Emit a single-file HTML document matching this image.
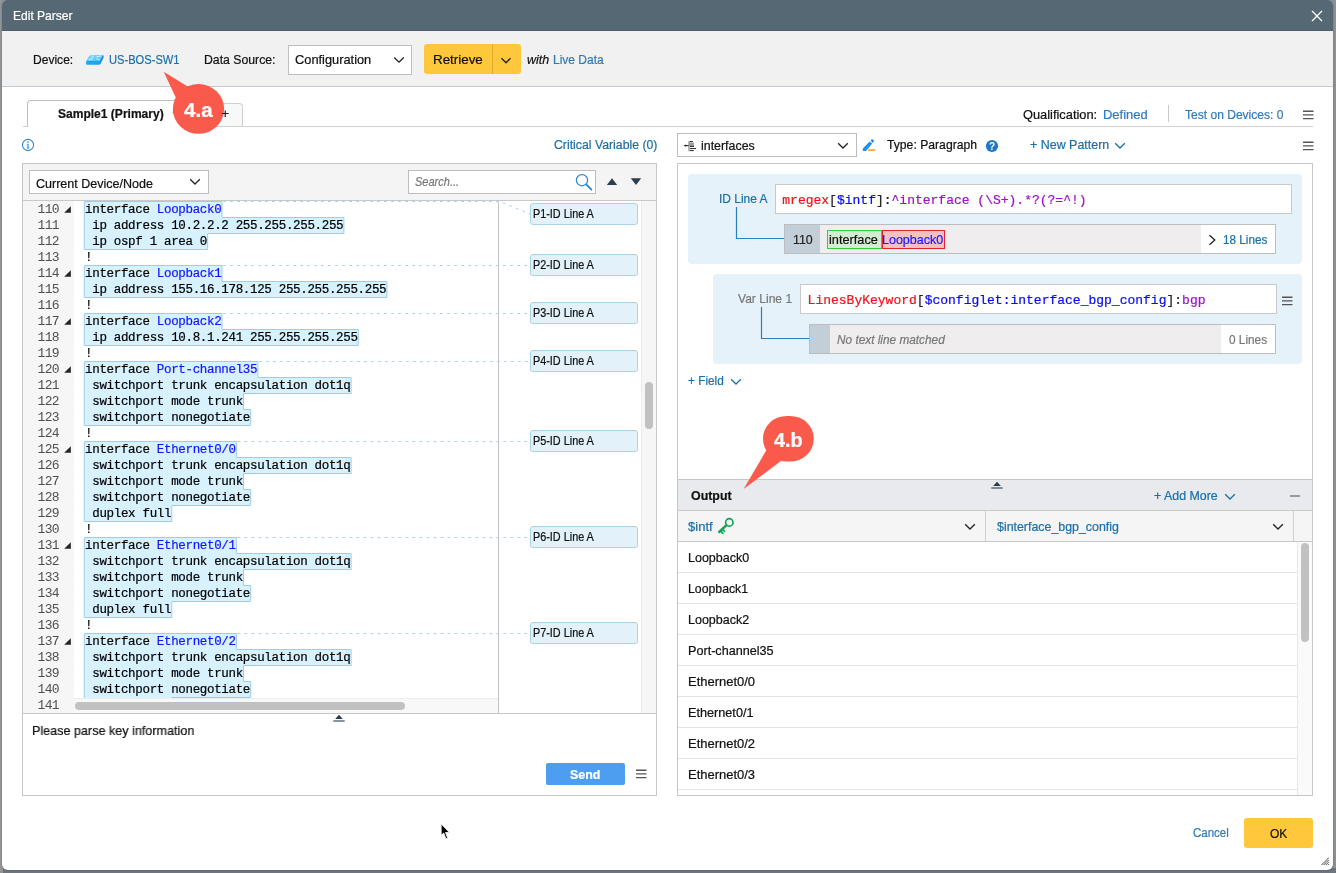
<!DOCTYPE html>
<html><head><meta charset="utf-8"><title>Edit Parser</title>
<style>
*{box-sizing:border-box;margin:0;padding:0}
html,body{width:1336px;height:873px;overflow:hidden}
body{position:relative;background:linear-gradient(90deg,#939698 0,#939698 3px,#8d9193 1333px,#8d9193 1336px);font-family:"Liberation Sans",sans-serif}
.abs,.t,.ln,.cl{position:absolute}
.t{white-space:pre;transform-origin:0 50%;-webkit-text-stroke:.22px}
#root{position:absolute;left:0;top:0;width:1336px;height:873px;will-change:transform}
#bgbot{left:3px;top:868px;width:1333px;height:5px;background:#6d767f}
#dlg{left:2px;top:0;width:1331px;height:870px;background:#fff;border-radius:5px 5px 6px 6px;overflow:hidden;box-shadow:0 0 2px rgba(0,0,0,.3)}
#hdr{left:0;top:0;width:1331px;height:31px;background:#566874;border-bottom:1px solid #4c5e6b}
#tb{left:0;top:31px;width:1331px;height:56px;background:#f1f1f1;border-bottom:1px solid #c5cad0}
.box{background:#fff;border:1px solid #c4c4c4}
.ln{left:37.6px;font:13px/16px "Liberation Mono",monospace;color:#505050;white-space:nowrap;letter-spacing:-.75px}
.cl{left:85.1px;font:12.5px/16px "Liberation Mono",monospace;color:#000;white-space:pre;letter-spacing:-.33px;-webkit-text-stroke:.2px}
.cl b{font-weight:normal;color:#1414ff}
.mono{font-family:"Liberation Mono",monospace}
.lbl{background:#e2f1fa;border:1px solid #a9d3ea;border-radius:3px}

</style></head>
<body>
<div id="root">
<div id="bgbot" class="abs"></div>
<div id="dlg" class="abs">
<div id="hdr" class="abs"></div>
<div id="tb" class="abs"></div>
</div>
<svg class="abs" style="left:1311px;top:10px" width="12" height="12" viewBox="0 0 12 12"><path d="M1.3 1.3L10.7 10.7M10.7 1.3L1.3 10.7" stroke="#fff" stroke-width="1.25" stroke-linecap="round"/></svg>
<svg class="abs" style="left:84px;top:53px" width="22" height="14" viewBox="84 53 22 14"><defs><linearGradient id="sw" x1="0" y1="0" x2="1" y2="1"><stop offset="0" stop-color="#86dafc"/><stop offset="1" stop-color="#4fc0f7"/></linearGradient></defs><path d="M86.2 61.2L90.3 54.9H103.1L103.5 57.6L99.9 64.4Q99.6 64.8 99 64.8H87Q86 64.7 86.1 63.6Z" fill="#1ba6ee"/><path d="M90.3 54.9H103.1L100.1 61H86.5Z" fill="url(#sw)"/><path d="M103.1 54.9L103.5 57.6L99.9 64.4L100.1 61Z" fill="#1488d2"/><path d="M89.3 59.5L92.6 58.7M92 56L93.6 57M96.8 58.6L99 59.8M97 56.7L100.6 56" stroke="#e4f6fe" stroke-width=".9" stroke-linecap="round"/></svg>
<div class="abs box" style="left:288px;top:45px;width:124px;height:30px;border-color:#bfbfbf"></div>
<svg class="abs" style="left:393px;top:56px" width="12" height="8" viewBox="0 0 12 8"><path d="M1.2 1.5L6 6.2L10.8 1.5" fill="none" stroke="#222" stroke-width="1.3"/></svg>
<div class="abs" style="left:424px;top:44px;width:97px;height:30px;background:#ffc83c;border-radius:3px"></div>
<div class="abs" style="left:492px;top:44px;width:1px;height:30px;background:#e3ad2c"></div>
<svg class="abs" style="left:500px;top:57px" width="12" height="8" viewBox="0 0 12 8"><path d="M1.5 1.2L6 5.8L10.5 1.2" fill="none" stroke="#222" stroke-width="1.3"/></svg>
<div class="abs" style="left:198px;top:103px;width:45px;height:24px;background:#f7f8f8;border:1px solid #cdd1d4;border-bottom:none;border-radius:4px 4px 0 0"></div>
<div class="abs" style="left:23px;top:126px;width:1290px;height:1px;background:#cdd1d4"></div>
<div class="abs" style="left:27px;top:100px;width:172px;height:27px;background:#fff;border:1px solid #b9bec3;border-bottom:none;border-radius:4px 4px 0 0"></div>
<svg class="abs" style="left:171.5px;top:110px" width="10" height="8" viewBox="0 0 10 8"><path d="M1 1.5L5 6L9 1.5" fill="none" stroke="#333" stroke-width="1.2"/></svg>
<div class="abs" style="left:1168px;top:105px;width:1px;height:17px;background:#c9c9c9"></div>
<svg class="abs" style="left:21px;top:138px" width="14" height="14" viewBox="0 0 14 14"><circle cx="7" cy="7" r="5.6" fill="#fff" stroke="#2f86d6" stroke-width="1.1"/><path d="M7 6.2V10M5.9 6.3H7.1M5.8 10H8.2" stroke="#2f86d6" stroke-width="1.1" fill="none"/><circle cx="7" cy="4.1" r=".8" fill="#2f86d6"/></svg>
<div class="abs" style="left:22px;top:163px;width:635px;height:633px;background:#fff;border:1px solid #c6c6c6"></div>
<div class="abs" style="left:23px;top:164px;width:633px;height:37px;background:#f4f4f4;border-bottom:1px solid #c9c9c9"></div>
<div class="abs box" style="left:29px;top:170px;width:180px;height:24px;border-color:#bdbdbd"></div>
<svg class="abs" style="left:189px;top:178px" width="12" height="8" viewBox="0 0 12 8"><path d="M1.2 1.3L6 6L10.8 1.3" fill="none" stroke="#222" stroke-width="1.3"/></svg>
<div class="abs box" style="left:408px;top:170px;width:188px;height:24px;border-color:#bdbdbd"></div>
<svg class="abs" style="left:574px;top:172px" width="20" height="20" viewBox="0 0 20 20"><circle cx="8" cy="8.2" r="5.6" fill="none" stroke="#2a8ad0" stroke-width="1.2"/><path d="M12.2 12.4L17.4 17.6" stroke="#2a8ad0" stroke-width="1.9" stroke-linecap="round"/></svg>
<svg class="abs" style="left:606px;top:177px" width="36" height="9" viewBox="0 0 36 9"><path d="M0.8 8L6 1.2L11.2 8Z M24.8 1.2H35.2L30 8Z" fill="#2c3e4d"/></svg>
<div class="abs" style="left:23px;top:201px;width:51px;height:512px;background:#f6f6f6"></div>
<div class="abs" style="left:498px;top:201px;width:1px;height:512px;background:#c2c2c2"></div>
<div class="abs" style="left:641px;top:201px;width:15px;height:512px;background:#f6f6f6;border-left:1px solid #ececec"></div>
<div class="abs" style="left:645px;top:382px;width:8px;height:47px;background:#c1c1c1;border-radius:4px"></div>
<svg class="abs" style="left:74px;top:201px" width="567" height="498" viewBox="74 201 567 498"><polygon points="84.3,201.5 222.0,201.5 222.0,217.5 343.9,217.5 343.9,233.5 207.7,233.5 207.7,249.5 84.3,249.5" fill="#d8f1fe" stroke="#9ccdec" stroke-width="1"/><polygon points="84.3,265.5 222.0,265.5 222.0,281.5 386.9,281.5 386.9,297.5 84.3,297.5" fill="#d8f1fe" stroke="#9ccdec" stroke-width="1"/><polygon points="84.3,313.5 222.0,313.5 222.0,329.5 358.3,329.5 358.3,345.5 84.3,345.5" fill="#d8f1fe" stroke="#9ccdec" stroke-width="1"/><polygon points="84.3,361.5 257.9,361.5 257.9,377.5 351.1,377.5 351.1,393.5 243.5,393.5 243.5,409.5 250.7,409.5 250.7,425.5 84.3,425.5" fill="#d8f1fe" stroke="#9ccdec" stroke-width="1"/><polygon points="84.3,441.5 236.4,441.5 236.4,457.5 351.1,457.5 351.1,473.5 243.5,473.5 243.5,489.5 250.7,489.5 250.7,505.5 171.8,505.5 171.8,521.5 84.3,521.5" fill="#d8f1fe" stroke="#9ccdec" stroke-width="1"/><polygon points="84.3,537.5 236.4,537.5 236.4,553.5 351.1,553.5 351.1,569.5 243.5,569.5 243.5,585.5 250.7,585.5 250.7,601.5 171.8,601.5 171.8,617.5 84.3,617.5" fill="#d8f1fe" stroke="#9ccdec" stroke-width="1"/><polygon points="84.3,633.5 236.4,633.5 236.4,649.5 351.1,649.5 351.1,665.5 243.5,665.5 243.5,681.5 250.7,681.5 250.7,697.5 171.8,697.5 171.8,713.5 84.3,713.5" fill="#d8f1fe" stroke="#9ccdec" stroke-width="1"/><path d="M223.0 201.5H500L530 214" fill="none" stroke="#a9d6ee" stroke-width="1" stroke-dasharray="3 4"/><path d="M223.0 265.5H530" fill="none" stroke="#a9d6ee" stroke-width="1" stroke-dasharray="3 4"/><path d="M223.0 313.5H530" fill="none" stroke="#a9d6ee" stroke-width="1" stroke-dasharray="3 4"/><path d="M258.9 361.5H530" fill="none" stroke="#a9d6ee" stroke-width="1" stroke-dasharray="3 4"/><path d="M237.4 441.5H530" fill="none" stroke="#a9d6ee" stroke-width="1" stroke-dasharray="3 4"/><path d="M237.4 537.5H530" fill="none" stroke="#a9d6ee" stroke-width="1" stroke-dasharray="3 4"/><path d="M237.4 633.5H530" fill="none" stroke="#a9d6ee" stroke-width="1" stroke-dasharray="3 4"/></svg>
<div class="ln" style="top:202px">110</div>
<svg class="abs" style="left:63.5px;top:206px" width="7" height="7" viewBox="0 0 7 7"><path d="M6.8 0.2V6.8H0.2Z" fill="#222"/></svg>
<div class="cl" style="top:202px">interface <b>Loopback0</b></div>
<div class="ln" style="top:218px">111</div>
<div class="cl" style="top:218px"> ip address 10.2.2.2 255.255.255.255</div>
<div class="ln" style="top:234px">112</div>
<div class="cl" style="top:234px"> ip ospf 1 area 0</div>
<div class="ln" style="top:250px">113</div>
<div class="cl" style="top:250px">!</div>
<div class="ln" style="top:266px">114</div>
<svg class="abs" style="left:63.5px;top:270px" width="7" height="7" viewBox="0 0 7 7"><path d="M6.8 0.2V6.8H0.2Z" fill="#222"/></svg>
<div class="cl" style="top:266px">interface <b>Loopback1</b></div>
<div class="ln" style="top:282px">115</div>
<div class="cl" style="top:282px"> ip address 155.16.178.125 255.255.255.255</div>
<div class="ln" style="top:298px">116</div>
<div class="cl" style="top:298px">!</div>
<div class="ln" style="top:314px">117</div>
<svg class="abs" style="left:63.5px;top:318px" width="7" height="7" viewBox="0 0 7 7"><path d="M6.8 0.2V6.8H0.2Z" fill="#222"/></svg>
<div class="cl" style="top:314px">interface <b>Loopback2</b></div>
<div class="ln" style="top:330px">118</div>
<div class="cl" style="top:330px"> ip address 10.8.1.241 255.255.255.255</div>
<div class="ln" style="top:346px">119</div>
<div class="cl" style="top:346px">!</div>
<div class="ln" style="top:362px">120</div>
<svg class="abs" style="left:63.5px;top:366px" width="7" height="7" viewBox="0 0 7 7"><path d="M6.8 0.2V6.8H0.2Z" fill="#222"/></svg>
<div class="cl" style="top:362px">interface <b>Port-channel35</b></div>
<div class="ln" style="top:378px">121</div>
<div class="cl" style="top:378px"> switchport trunk encapsulation dot1q</div>
<div class="ln" style="top:394px">122</div>
<div class="cl" style="top:394px"> switchport mode trunk</div>
<div class="ln" style="top:410px">123</div>
<div class="cl" style="top:410px"> switchport nonegotiate</div>
<div class="ln" style="top:426px">124</div>
<div class="cl" style="top:426px">!</div>
<div class="ln" style="top:442px">125</div>
<svg class="abs" style="left:63.5px;top:446px" width="7" height="7" viewBox="0 0 7 7"><path d="M6.8 0.2V6.8H0.2Z" fill="#222"/></svg>
<div class="cl" style="top:442px">interface <b>Ethernet0/0</b></div>
<div class="ln" style="top:458px">126</div>
<div class="cl" style="top:458px"> switchport trunk encapsulation dot1q</div>
<div class="ln" style="top:474px">127</div>
<div class="cl" style="top:474px"> switchport mode trunk</div>
<div class="ln" style="top:490px">128</div>
<div class="cl" style="top:490px"> switchport nonegotiate</div>
<div class="ln" style="top:506px">129</div>
<div class="cl" style="top:506px"> duplex full</div>
<div class="ln" style="top:522px">130</div>
<div class="cl" style="top:522px">!</div>
<div class="ln" style="top:538px">131</div>
<svg class="abs" style="left:63.5px;top:542px" width="7" height="7" viewBox="0 0 7 7"><path d="M6.8 0.2V6.8H0.2Z" fill="#222"/></svg>
<div class="cl" style="top:538px">interface <b>Ethernet0/1</b></div>
<div class="ln" style="top:554px">132</div>
<div class="cl" style="top:554px"> switchport trunk encapsulation dot1q</div>
<div class="ln" style="top:570px">133</div>
<div class="cl" style="top:570px"> switchport mode trunk</div>
<div class="ln" style="top:586px">134</div>
<div class="cl" style="top:586px"> switchport nonegotiate</div>
<div class="ln" style="top:602px">135</div>
<div class="cl" style="top:602px"> duplex full</div>
<div class="ln" style="top:618px">136</div>
<div class="cl" style="top:618px">!</div>
<div class="ln" style="top:634px">137</div>
<svg class="abs" style="left:63.5px;top:638px" width="7" height="7" viewBox="0 0 7 7"><path d="M6.8 0.2V6.8H0.2Z" fill="#222"/></svg>
<div class="cl" style="top:634px">interface <b>Ethernet0/2</b></div>
<div class="ln" style="top:650px">138</div>
<div class="cl" style="top:650px"> switchport trunk encapsulation dot1q</div>
<div class="ln" style="top:666px">139</div>
<div class="cl" style="top:666px"> switchport mode trunk</div>
<div class="ln" style="top:682px">140</div>
<div class="cl" style="top:682px"> switchport nonegotiate</div>
<div class="ln" style="top:698px">141</div>
<div class="abs" style="left:74px;top:698px;width:424px;height:15px;background:#f8f8f8;border-top:1px solid #ececec"></div>
<div class="abs" style="left:75px;top:702px;width:330px;height:8px;background:#c1c1c1;border-radius:4px"></div>
<div class="abs" style="left:23px;top:713px;width:633px;height:1px;background:#c6c6c6"></div>
<svg class="abs" style="left:333px;top:713.5px" width="12" height="8" viewBox="0 0 12 8"><path d="M2.2 5L6 0.8L9.8 5Z" fill="#2c3e4d"/><path d="M0.3 7H11.7" stroke="#2c3e4d" stroke-width="1.1"/></svg>
<div class="abs lbl" style="left:530px;top:203px;width:108px;height:22px"></div>
<div class="abs lbl" style="left:530px;top:254px;width:108px;height:22px"></div>
<div class="abs lbl" style="left:530px;top:302px;width:108px;height:22px"></div>
<div class="abs lbl" style="left:530px;top:350px;width:108px;height:22px"></div>
<div class="abs lbl" style="left:530px;top:430px;width:108px;height:22px"></div>
<div class="abs lbl" style="left:530px;top:526px;width:108px;height:22px"></div>
<div class="abs lbl" style="left:530px;top:622px;width:108px;height:22px"></div>
<div class="abs" style="left:546px;top:763px;width:79px;height:22px;background:#4d9ef1;border-radius:2px"></div>
<div class="abs box" style="left:677px;top:133px;width:180px;height:24px;border-color:#bdbdbd"></div>
<svg class="abs" style="left:683px;top:139px" width="15" height="14" viewBox="683 139 15 14"><path d="M688.3 141H689.8V151.2H688.3Z M689.8 142.4H693.9V146H689.8Z" fill="#9c9c9c"/><path d="M684.4 145.6H688.6" stroke="#222" stroke-width="1.1"/><path d="M683.9 145.6L685.8 144.4V146.8Z" fill="#222"/><path d="M690 141.5H692.8M690 146.4H694M690 148.6H696M690 150.6H693.8" stroke="#222" stroke-width="1"/></svg>
<svg class="abs" style="left:837px;top:142px" width="12" height="8" viewBox="0 0 12 8"><path d="M1.2 1.3L6 6L10.8 1.3" fill="none" stroke="#222" stroke-width="1.3"/></svg>
<svg class="abs" style="left:861px;top:137px" width="16" height="16" viewBox="861 137 16 16"><path d="M862.9 148.4L869.6 141.4L872.2 143.6L866 151H862.9Z" fill="#1e90f0"/><path d="M870.6 140.3L872.2 138.9L874.3 141L872.6 142.9Z" fill="#1e90f0"/><path d="M867.9 150H875.1" stroke="#f5a83b" stroke-width="1.8"/></svg>
<svg class="abs" style="left:985px;top:139px" width="14" height="14" viewBox="0 0 14 14"><circle cx="7" cy="7" r="6.1" fill="#1f78c1"/><text x="7" y="10.6" text-anchor="middle" font-family="Liberation Sans" font-weight="bold" font-size="10" fill="#fff">?</text></svg>
<div class="abs" style="left:677px;top:163px;width:636px;height:633px;background:#fff;border:1px solid #c6c6c6"></div>
<div class="abs" style="left:688px;top:174px;width:614px;height:90px;background:#e5f2fa;border-radius:4px"></div>
<div class="abs box" style="left:775px;top:184px;width:517px;height:30px;border-color:#c9c9c9"></div>
<svg class="abs" style="left:730px;top:205px" width="56" height="36" viewBox="730 205 56 36"><path d="M736.5 207V238.5H784" fill="none" stroke="#2a7fc0" stroke-width="1.2"/></svg>
<div class="abs" style="left:784px;top:224px;width:492px;height:30px;background:#efeded;border:1px solid #bdbdbd"></div>
<div class="abs" style="left:785px;top:225px;width:35px;height:28px;background:#c3cfd8"></div>
<div class="abs" style="left:1201px;top:225px;width:74px;height:28px;background:#fff"></div>
<div class="abs" style="left:827px;top:230px;width:55px;height:19px;background:#d3edd2;border:1px solid #2ad43a"></div>
<div class="abs" style="left:882px;top:230px;width:63px;height:19px;background:#f3c1c4;border:1px solid #e8222c"></div>
<svg class="abs" style="left:1208px;top:234px" width="9" height="12" viewBox="0 0 9 12"><path d="M1.5 1.2L6.8 6L1.5 10.8" fill="none" stroke="#222" stroke-width="1.3"/></svg>
<div class="abs" style="left:713px;top:274px;width:589px;height:90px;background:#e5f2fa;border-radius:4px"></div>
<div class="abs box" style="left:800px;top:284px;width:477px;height:30px;border-color:#c9c9c9"></div>
<svg class="abs" style="left:755px;top:305px" width="56" height="36" viewBox="755 305 56 36"><path d="M761.5 307V338.5H809" fill="none" stroke="#2a7fc0" stroke-width="1.2"/></svg>
<div class="abs" style="left:809px;top:324px;width:467px;height:30px;background:#efeded;border:1px solid #bdbdbd"></div>
<div class="abs" style="left:810px;top:325px;width:20px;height:28px;background:#c3cfd8"></div>
<div class="abs" style="left:1221px;top:325px;width:54px;height:28px;background:#fff"></div>
<div class="abs mono" style="left:782.3px;top:193px;font-size:13px;line-height:16px;white-space:pre;letter-spacing:0px;-webkit-text-stroke:.22px"><span style="color:#f5101c">mregex</span><span style="color:#222">[</span><span style="color:#0a0aff">$intf</span><span style="color:#222">]:</span><span style="color:#a010d0">^interface (\S+).*?(?=^!)</span></div>
<div class="abs mono" style="left:807.6px;top:293px;font-size:13px;line-height:16px;white-space:pre;letter-spacing:0px;-webkit-text-stroke:.22px"><span style="color:#f5101c">LinesByKeyword</span><span style="color:#222">[</span><span style="color:#0a0aff">$configlet:interface_bgp_config</span><span style="color:#222">]:</span><span style="color:#a010d0">bgp</span></div>
<div class="abs" style="left:678px;top:479px;width:634px;height:31px;background:#e8eaed;border-top:1px solid #c6c6c6"></div>
<div class="abs" style="left:678px;top:510px;width:634px;height:32px;background:#f5f5f5;border-top:1px solid #c9c9c9;border-bottom:1px solid #c9c9c9"></div>
<div class="abs" style="left:985px;top:511px;width:1px;height:30px;background:#d0d0d0"></div>
<div class="abs" style="left:1293px;top:511px;width:1px;height:30px;background:#d0d0d0"></div>
<div class="abs" style="left:1290px;top:495px;width:10px;height:1.5px;background:#999"></div>
<svg class="abs" style="left:716px;top:516px" width="20" height="20" viewBox="716 516 20 20"><circle cx="729.3" cy="522.4" r="3.7" fill="none" stroke="#10a552" stroke-width="1.7"/><path d="M726.5 525.2L719.2 532" stroke="#10a552" stroke-width="2.4" stroke-linecap="round"/><path d="M722.4 529.4L724.6 531.4M720.7 530.9L722.9 533.4" stroke="#10a552" stroke-width="1.6" stroke-linecap="round"/></svg>
<div class="abs" style="left:678px;top:572px;width:620px;height:1px;background:#e4e4e4"></div>
<div class="abs" style="left:678px;top:603px;width:620px;height:1px;background:#e4e4e4"></div>
<div class="abs" style="left:678px;top:634px;width:620px;height:1px;background:#e4e4e4"></div>
<div class="abs" style="left:678px;top:665px;width:620px;height:1px;background:#e4e4e4"></div>
<div class="abs" style="left:678px;top:696px;width:620px;height:1px;background:#e4e4e4"></div>
<div class="abs" style="left:678px;top:727px;width:620px;height:1px;background:#e4e4e4"></div>
<div class="abs" style="left:678px;top:758px;width:620px;height:1px;background:#e4e4e4"></div>
<div class="abs" style="left:678px;top:789px;width:620px;height:1px;background:#e4e4e4"></div>
<div class="abs" style="left:1297px;top:542px;width:15px;height:253px;background:#fafafa;border-left:1px solid #e8e8e8"></div>
<div class="abs" style="left:1301px;top:543px;width:8px;height:99px;background:#c1c1c1;border-radius:4px"></div>
<svg class="abs" style="left:1302.5px;top:110px" width="11" height="10" viewBox="0 0 11 10"><path d="M0 1.2H10.5M0 4.9H10.5M0 8.6H10.5" stroke="#555" stroke-width="1.4"/></svg>
<svg class="abs" style="left:1302.5px;top:141px" width="11" height="10" viewBox="0 0 11 10"><path d="M0 1.2H10.5M0 4.9H10.5M0 8.6H10.5" stroke="#555" stroke-width="1.4"/></svg>
<svg class="abs" style="left:1282px;top:295.5px" width="11" height="10" viewBox="0 0 11 10"><path d="M0 1.2H10.5M0 4.9H10.5M0 8.6H10.5" stroke="#555" stroke-width="1.4"/></svg>
<svg class="abs" style="left:636px;top:769.4px" width="11" height="10" viewBox="0 0 11 10"><path d="M0 1.2H10.5M0 4.9H10.5M0 8.6H10.5" stroke="#555" stroke-width="1.4"/></svg>
<svg class="abs" style="left:1114px;top:142px" width="12" height="8" viewBox="0 0 12 8"><path d="M1.2 1.3L6 6L10.8 1.3" fill="none" stroke="#1b6fa8" stroke-width="1.3"/></svg>
<svg class="abs" style="left:729.5px;top:378px" width="12" height="8" viewBox="0 0 12 8"><path d="M1.2 1.3L6 6L10.8 1.3" fill="none" stroke="#1b6fa8" stroke-width="1.3"/></svg>
<svg class="abs" style="left:1224px;top:492.5px" width="12" height="8" viewBox="0 0 12 8"><path d="M1.2 1.3L6 6L10.8 1.3" fill="none" stroke="#1b6fa8" stroke-width="1.3"/></svg>
<svg class="abs" style="left:964px;top:522.5px" width="12" height="8" viewBox="0 0 12 8"><path d="M1.2 1.3L6 6L10.8 1.3" fill="none" stroke="#222" stroke-width="1.3"/></svg>
<svg class="abs" style="left:1272px;top:522.5px" width="12" height="8" viewBox="0 0 12 8"><path d="M1.2 1.3L6 6L10.8 1.3" fill="none" stroke="#222" stroke-width="1.3"/></svg>
<svg class="abs" style="left:991px;top:480.5px" width="12" height="8" viewBox="0 0 12 8"><path d="M2.2 5L6 0.8L9.8 5Z" fill="#2c3e4d"/><path d="M0.3 7H11.7" stroke="#2c3e4d" stroke-width="1.1"/></svg>
<div class="abs" style="left:1244px;top:818px;width:69px;height:30px;background:#ffc83c;border-radius:3px"></div>
<svg class="abs" style="left:1320.5px;top:857.3px" width="8.5" height="8.5" viewBox="0 0 10 10"><path d="M9.5 0.5L0.5 9.5M9.5 3L3 9.5M9.5 5.5L5.5 9.5M9.5 8L8 9.5" stroke="#333" stroke-width="1" /></svg>
<svg class="abs" style="left:155px;top:65px" width="75" height="75" viewBox="155 65 75 75"><ellipse cx="198.5" cy="108.9" rx="25.6" ry="24.9" fill="#fa5a4b"/><path d="M163.7 71.7L188.5 87L176 98Z" fill="#fa5a4b"/></svg>
<svg class="abs" style="left:738px;top:410px" width="80" height="85" viewBox="738 410 80 85"><rect x="763" y="415.9" width="50.8" height="45.7" rx="24" ry="22.5" fill="#fa5a4b"/><path d="M743.6 489L766.5 450L781 461Z" fill="#fa5a4b"/></svg>
<svg class="abs" style="left:438px;top:821px" width="16" height="22" viewBox="438 821 16 22"><path d="M441.2 824V835.2L443.7 833L446 838.7L447.7 838L445.4 832.5H449.3Z" fill="#000" stroke="#f4f4f4" stroke-width=".8"/></svg>
<span class="t" style="left:13.17px;top:7px;font:normal normal 13px/18px 'Liberation Sans', sans-serif;color:#fff;transform:scaleX(0.9254);">Edit Parser</span>
<span class="t" style="left:33.37px;top:51px;font:normal normal 13px/18px 'Liberation Sans', sans-serif;color:#111;transform:scaleX(0.9272);">Device:</span>
<span class="t" style="left:109.14px;top:51px;font:normal normal 13px/18px 'Liberation Sans', sans-serif;color:#1b6fa8;transform:scaleX(0.8568);">US-BOS-SW1</span>
<span class="t" style="left:204.06px;top:51px;font:normal normal 13px/18px 'Liberation Sans', sans-serif;color:#111;transform:scaleX(0.9426);">Data Source:</span>
<span class="t" style="left:295.0px;top:51px;font:normal normal 13px/18px 'Liberation Sans', sans-serif;color:#111;transform:scaleX(0.9858);">Configuration</span>
<span class="t" style="left:432.97px;top:51px;font:normal normal 13px/18px 'Liberation Sans', sans-serif;color:#111;transform:scaleX(1.0280);">Retrieve</span>
<span class="t" style="left:527.0px;top:51px;font:italic normal 13px/18px 'Liberation Sans', sans-serif;color:#111;transform:scaleX(0.9612);">with</span>
<span class="t" style="left:553.08px;top:51px;font:normal normal 13px/18px 'Liberation Sans', sans-serif;color:#337ab7;transform:scaleX(0.9234);">Live Data</span>
<span class="t" style="left:57.7px;top:105px;font:normal bold 13px/18px 'Liberation Sans', sans-serif;color:#111;transform:scaleX(0.9259);">Sample1 (Primary)</span>
<span class="t" style="left:221.5px;top:105px;font:normal normal 13px/18px 'Liberation Sans', sans-serif;color:#222;transform:scaleX(1.0000);">+</span>
<span class="t" style="left:1022.5px;top:106px;font:normal normal 13px/18px 'Liberation Sans', sans-serif;color:#111;transform:scaleX(0.9861);">Qualification:</span>
<span class="t" style="left:1102.5px;top:106px;font:normal normal 13px/18px 'Liberation Sans', sans-serif;color:#337ab7;transform:scaleX(0.9982);">Defined</span>
<span class="t" style="left:1185.0px;top:106px;font:normal normal 13px/18px 'Liberation Sans', sans-serif;color:#337ab7;transform:scaleX(0.9265);">Test on Devices: 0</span>
<span class="t" style="left:553.8px;top:136px;font:normal normal 13px/18px 'Liberation Sans', sans-serif;color:#1b6fa8;transform:scaleX(0.9438);">Critical Variable (0)</span>
<span class="t" style="left:700.7px;top:137px;font:normal normal 13px/18px 'Liberation Sans', sans-serif;color:#111;transform:scaleX(0.9532);">interfaces</span>
<span class="t" style="left:887.2px;top:136px;font:normal normal 13px/18px 'Liberation Sans', sans-serif;color:#111;transform:scaleX(0.9365);">Type: Paragraph</span>
<span class="t" style="left:1029.7px;top:136px;font:normal normal 13px/18px 'Liberation Sans', sans-serif;color:#1b6fa8;transform:scaleX(0.9575);">+ New Pattern</span>
<span class="t" style="left:35.7px;top:175px;font:normal normal 13px/18px 'Liberation Sans', sans-serif;color:#111;transform:scaleX(0.9640);">Current Device/Node</span>
<span class="t" style="left:415.2px;top:173px;font:italic normal 13px/18px 'Liberation Sans', sans-serif;color:#777;transform:scaleX(0.8480);">Search...</span>
<span class="t" style="left:718.58px;top:190px;font:normal normal 13px/18px 'Liberation Sans', sans-serif;color:#1b6fa8;transform:scaleX(0.9204);">ID Line A</span>
<span class="t" style="left:793.4px;top:231px;font:normal normal 13px/18px 'Liberation Sans', sans-serif;color:#222;transform:scaleX(0.9514);">110</span>
<span class="t" style="left:828.5px;top:231px;font:normal normal 13px/18px 'Liberation Sans', sans-serif;color:#111;transform:scaleX(0.9792);">interface</span>
<span class="t" style="left:882.34px;top:231px;font:normal normal 13px/18px 'Liberation Sans', sans-serif;color:#1a1aff;transform:scaleX(0.9618);">Loopback0</span>
<span class="t" style="left:1222.6px;top:231px;font:normal normal 13px/18px 'Liberation Sans', sans-serif;color:#1b6fa8;transform:scaleX(0.9003);">18 Lines</span>
<span class="t" style="left:738.1px;top:290px;font:normal normal 13px/18px 'Liberation Sans', sans-serif;color:#777;transform:scaleX(0.9282);">Var Line 1</span>
<span class="t" style="left:837.4px;top:331px;font:italic normal 13px/18px 'Liberation Sans', sans-serif;color:#777;transform:scaleX(0.9088);">No text line matched</span>
<span class="t" style="left:1228.8px;top:331px;font:normal normal 13px/18px 'Liberation Sans', sans-serif;color:#777;transform:scaleX(0.9076);">0 Lines</span>
<span class="t" style="left:688.3px;top:372px;font:normal normal 13px/18px 'Liberation Sans', sans-serif;color:#1b6fa8;transform:scaleX(0.9093);">+ Field</span>
<span class="t" style="left:690.5px;top:487px;font:normal bold 13px/18px 'Liberation Sans', sans-serif;color:#111;transform:scaleX(0.9523);">Output</span>
<span class="t" style="left:1153.8px;top:487px;font:normal normal 13px/18px 'Liberation Sans', sans-serif;color:#1b6fa8;transform:scaleX(0.9534);">+ Add More</span>
<span class="t" style="left:688.4px;top:518px;font:normal normal 13px/18px 'Liberation Sans', sans-serif;color:#1b6fa8;transform:scaleX(1.0016);">$intf</span>
<span class="t" style="left:996.5px;top:518px;font:normal normal 13px/18px 'Liberation Sans', sans-serif;color:#1b6fa8;transform:scaleX(0.9530);">$interface_bgp_config</span>
<span class="t" style="left:32.03px;top:722px;font:normal normal 13px/18px 'Liberation Sans', sans-serif;color:#111;transform:scaleX(0.9681);">Please parse key information</span>
<span class="t" style="left:570.1px;top:766px;font:normal bold 13px/18px 'Liberation Sans', sans-serif;color:#fff;transform:scaleX(0.9516);">Send</span>
<span class="t" style="left:1192.6px;top:824px;font:normal normal 13px/18px 'Liberation Sans', sans-serif;color:#337ab7;transform:scaleX(0.8847);">Cancel</span>
<span class="t" style="left:1269.9px;top:824px;font:normal normal 13.5px/19px 'Liberation Sans', sans-serif;color:#111;transform:scaleX(0.8871);">OK</span>
<span class="t" style="left:183.7px;top:96px;font:normal bold 20px/28px 'Liberation Sans', sans-serif;color:#fff;transform:scaleX(1.0286);">4.a</span>
<span class="t" style="left:773.5px;top:426px;font:normal bold 20px/28px 'Liberation Sans', sans-serif;color:#fff;transform:scaleX(0.9937);">4.b</span>
<span class="t" style="left:687.74px;top:549px;font:normal normal 13px/18px 'Liberation Sans', sans-serif;color:#111;transform:scaleX(0.9618);">Loopback0</span>
<span class="t" style="left:687.76px;top:580px;font:normal normal 13px/18px 'Liberation Sans', sans-serif;color:#111;transform:scaleX(0.9442);">Loopback1</span>
<span class="t" style="left:687.74px;top:611px;font:normal normal 13px/18px 'Liberation Sans', sans-serif;color:#111;transform:scaleX(0.9618);">Loopback2</span>
<span class="t" style="left:687.73px;top:642px;font:normal normal 13px/18px 'Liberation Sans', sans-serif;color:#111;transform:scaleX(0.9708);">Port-channel35</span>
<span class="t" style="left:687.7px;top:673px;font:normal normal 13px/18px 'Liberation Sans', sans-serif;color:#111;transform:scaleX(0.9972);">Ethernet0/0</span>
<span class="t" style="left:687.73px;top:704px;font:normal normal 13px/18px 'Liberation Sans', sans-serif;color:#111;transform:scaleX(0.9745);">Ethernet0/1</span>
<span class="t" style="left:687.7px;top:735px;font:normal normal 13px/18px 'Liberation Sans', sans-serif;color:#111;transform:scaleX(0.9972);">Ethernet0/2</span>
<span class="t" style="left:687.7px;top:766px;font:normal normal 13px/18px 'Liberation Sans', sans-serif;color:#111;transform:scaleX(0.9972);">Ethernet0/3</span>
<span class="t" style="left:532.8px;top:206px;font:normal normal 12px/17px 'Liberation Sans', sans-serif;color:#111;transform:scaleX(0.9026);">P1-ID Line A</span>
<span class="t" style="left:532.8px;top:257px;font:normal normal 12px/17px 'Liberation Sans', sans-serif;color:#111;transform:scaleX(0.9026);">P2-ID Line A</span>
<span class="t" style="left:532.8px;top:305px;font:normal normal 12px/17px 'Liberation Sans', sans-serif;color:#111;transform:scaleX(0.9026);">P3-ID Line A</span>
<span class="t" style="left:532.8px;top:353px;font:normal normal 12px/17px 'Liberation Sans', sans-serif;color:#111;transform:scaleX(0.9026);">P4-ID Line A</span>
<span class="t" style="left:532.8px;top:433px;font:normal normal 12px/17px 'Liberation Sans', sans-serif;color:#111;transform:scaleX(0.9026);">P5-ID Line A</span>
<span class="t" style="left:532.8px;top:529px;font:normal normal 12px/17px 'Liberation Sans', sans-serif;color:#111;transform:scaleX(0.9026);">P6-ID Line A</span>
<span class="t" style="left:532.8px;top:625px;font:normal normal 12px/17px 'Liberation Sans', sans-serif;color:#111;transform:scaleX(0.9026);">P7-ID Line A</span>
</div>
</body></html>
